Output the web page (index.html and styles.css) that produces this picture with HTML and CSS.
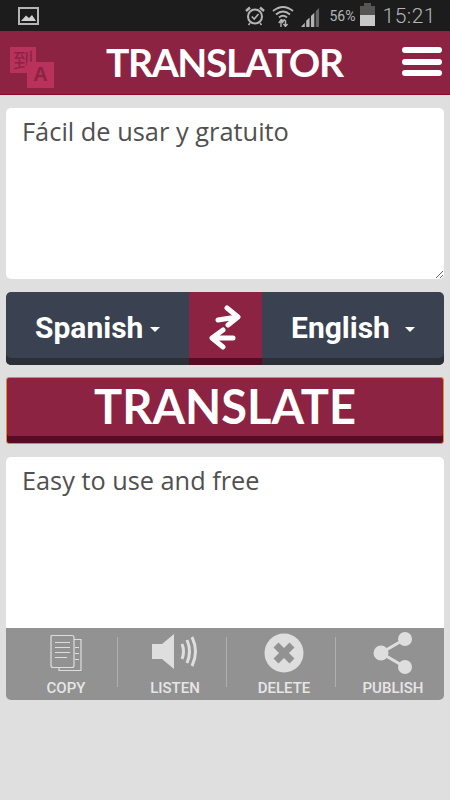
FILE: index.html
```html
<!DOCTYPE html>
<html lang="en">
<head>
    <meta charset="UTF-8">
    <meta name="viewport" content="width=device-width, initial-scale=1.0">
    <title>Translator</title>
    <link rel="stylesheet" href="styles.css">
</head>
<body>
    <div class="status-bar">
        <svg class="status-picture" width="21" height="18" viewBox="0 0 21 18">
            <rect x="1" y="1" width="19" height="16" fill="none" stroke="#b5b5b5" stroke-width="2"/>
            <path d="M3 14 L8 8.500 L11 11 L14 8 L18 14 Z" fill="#d0d0d0"/>
        </svg>
        <div class="status-right">
            <svg width="20" height="20" viewBox="0 0 20 20" fill="none" stroke="#b5b5b5">
                <circle cx="10" cy="10.500" r="7" stroke-width="2"/>
                <path d="M6.800 10.500 L9.200 13 L13.500 8" stroke-width="1.600"/>
                <path d="M1 5 L5 1.500 M19 5 L15 1.500" stroke-width="2.400"/>
                <path d="M5 17 L3.500 19 M15 17 L16.500 19" stroke-width="1.500"/>
            </svg>
            <svg class="status-wifi" width="22" height="22" viewBox="0 0 22 22" fill="none" stroke="#b5b5b5" stroke-width="1.800">
                <path d="M1 6 Q11 -2 21 6"/>
                <path d="M4 9.500 Q11 3.500 18 9.500"/>
                <path d="M7 12.500 Q11 9 15 12.500"/>
                <path d="M9 14.500 L11 16 L13 14.500"/>
                <path d="M9 15 V22 M6.800 18 L9 15 L11 18 M13.500 21 V15 M11.500 19 L13.500 21.500 L15.500 19" stroke-width="1.400"/>
            </svg>
            <svg class="status-signal" width="19" height="19" viewBox="0 0 20 20">
                <path d="M0 20 L4 15.500 V20 Z M5.500 20 V13.500 L9 10 V20 Z M10.500 20 V8.500 L14 5 V20 Z" fill="#b5b5b5"/>
                <path d="M15.500 20 V3.500 L19 0 V20 Z" fill="#666"/>
            </svg>
            <span class="status-battery-text">56%</span>
            <div class="status-battery"><div class="status-battery-fill"></div></div>
            <span class="status-time">15:21</span>
        </div>
    </div>

    <header class="app-header">
        <div class="app-logo">
            <div class="logo-back">到</div>
            <div class="logo-front">A</div>
        </div>
        <h1 class="app-title">TRANSLATOR</h1>
        <div class="menu-btn">
            <span></span>
            <span></span>
            <span></span>
        </div>
    </header>

    <main class="content">
        <textarea class="source-text">Fácil de usar y gratuito</textarea>

        <div class="lang-bar">
            <div class="lang lang-from">Spanish<span class="caret"></span></div>
            <div class="swap">
                <svg width="34" height="46" viewBox="0 0 34 46" fill="none" stroke="#fff" stroke-width="5" stroke-linecap="round" stroke-linejoin="round">
                    <path d="M9 15 L28 12 M18 3 L29 12 L19 20"/>
                    <path d="M24 33 H4 M14 25 L3 33 L14 42"/>
                </svg>
            </div>
            <div class="lang lang-to">English<span class="caret"></span></div>
        </div>

        <button class="translate-btn">TRANSLATE</button>

        <div class="result">
            <div class="result-text">Easy to use and free</div>
            <div class="actions">
                <div class="action">
                    <svg width="32" height="37" viewBox="0 0 32 37" fill="none" stroke="#dedede" stroke-width="1.200">
                        <path d="M9 33 V36 H31 V5 H24"/>
                        <path d="M2 1 H22 Q24 1 24 3 V31 Q24 33 22 33 H3 Q1 33 1 31 V2 Q1 1 2 1 Z"/>
                        <path d="M5 8 H20 M5 13 H20 M5 18 H20 M5 23 H17 M25 13 H29 M25 19 H29 M25 25 H29"/>
                    </svg>
                    <span>COPY</span>
                </div>
                <div class="action-sep"></div>
                <div class="action">
                    <svg width="46" height="38" viewBox="0 0 46 38" fill="none" stroke="#dedede">
                        <path d="M0 10 H10 L22 0 V35 L10 25 H0 Z" fill="#dedede" stroke="none"/>
                        <path d="M30 10 Q33 17.500 30 25" stroke-width="3"/>
                        <path d="M35 6 Q40 17.500 35 29" stroke-width="3"/>
                        <path d="M40 3 Q47 17.500 40 32" stroke-width="3"/>
                    </svg>
                    <span>LISTEN</span>
                </div>
                <div class="action-sep"></div>
                <div class="action">
                    <svg width="40" height="40" viewBox="0 0 40 40">
                        <circle cx="20" cy="20" r="19.500" fill="#dedede"/>
                        <path d="M12 12 L28 28 M28 12 L12 28" stroke="#929292" stroke-width="7"/>
                    </svg>
                    <span>DELETE</span>
                </div>
                <div class="action-sep"></div>
                <div class="action">
                    <svg width="40" height="42" viewBox="0 0 40 42" fill="none">
                        <path d="M32 7 L8 21 L32 35" stroke="#dedede" stroke-width="3"/>
                        <circle cx="32" cy="7" r="7" fill="#dedede"/>
                        <circle cx="8" cy="21" r="7.500" fill="#dedede"/>
                        <circle cx="32" cy="35" r="7" fill="#dedede"/>
                    </svg>
                    <span>PUBLISH</span>
                </div>
            </div>
        </div>
    </main>
</body>
</html>
```

FILE: styles.css
```css
html, body {
    height: 100%;
}
body {
    margin: 0;
    background-color: #dfdfdf;
    font-family: Roboto, "Liberation Sans", sans-serif;
    overflow: hidden;
}

/* Status bar */
.status-bar {
    display: flex;
    align-items: center;
    justify-content: space-between;
    height: 31px;
    padding: 0 14px 0 18px;
    background-color: #1c1c1c;
    color: #b5b5b5;
}
.status-right {
    display: flex;
    align-items: center;
}
.status-wifi {
    margin-left: 7px;
}
.status-signal {
    margin-left: 7px;
    margin-top: 3px;
}
.status-battery-text {
    margin-left: 9px;
    font-size: 14px;
}
.status-battery {
    position: relative;
    width: 15px;
    height: 20px;
    margin-left: 5px;
    background-color: #555;
}
.status-battery::before {
    content: "";
    position: absolute;
    top: -3px;
    left: 4px;
    width: 7px;
    height: 3px;
    background-color: #555;
}
.status-battery-fill {
    position: absolute;
    left: 0;
    right: 0;
    bottom: 0;
    height: 11px;
    background-color: #c8c8c8;
}
.status-time {
    margin-left: 7px;
    font-size: 21px;
    font-weight: 300;
    letter-spacing: 0.5px;
}

/* Header */
.app-header {
    display: flex;
    align-items: center;
    height: 63px;
    padding-left: 10px;
    background-color: #8c2342;
    border-bottom: 1px solid #8e0a22;
}
.app-logo {
    position: relative;
    width: 44px;
    height: 42px;
    margin-top: 10px;
}
.logo-back, .logo-front {
    position: absolute;
    display: flex;
    align-items: center;
    justify-content: center;
    background-color: #b8325c;
    color: #8c2342;
}
.logo-back {
    left: 0;
    top: 0;
    width: 26px;
    height: 26px;
    font-family: "Noto Sans CJK SC", sans-serif;
    font-size: 21px;
    line-height: 1;
    font-weight: 400;
}
.logo-front {
    left: 17px;
    top: 15px;
    width: 27px;
    height: 26px;
    font-family: "Liberation Sans", sans-serif;
    font-size: 20px;
    font-weight: bold;
}
.app-title {
    flex: 1;
    margin: 0 0 1px 52px;
    color: #fff;
    font-family: Lato, sans-serif;
    font-size: 39px;
    font-weight: bold;
    letter-spacing: -1.4px;
}
.menu-btn {
    display: flex;
    flex-direction: column;
    gap: 5.5px;
    width: 40px;
    margin: 0 8px 2px 0;
}
.menu-btn span {
    height: 6px;
    border-radius: 3px;
    background-color: #fff;
}

/* Main content */
.content {
    display: flex;
    flex-direction: column;
    padding: 13px 6px 0 6px;
}
.source-text {
    display: block;
    box-sizing: border-box;
    width: 100%;
    height: 171px;
    margin: 0;
    padding: 6px 16px;
    border: 0;
    border-radius: 5px;
    outline: 0;
    background-color: #fff;
    color: #505050;
    font-family: "Open Sans", sans-serif;
    font-size: 25.4px;
}
.lang-bar {
    display: flex;
    height: 73px;
    margin-top: 13px;
    border-radius: 5px;
    overflow: hidden;
    background-color: #3a4251;
    box-shadow: inset 0 -7px 0 #2d2f38;
}
.lang {
    display: flex;
    align-items: center;
    color: #fff;
    font-size: 30px;
    font-weight: 700;
    padding-bottom: 2px;
}
.lang-from {
    width: 183px;
    padding-left: 29px;
    box-sizing: border-box;
}
.lang-to {
    flex: 1;
    padding-left: 29px;
}
.caret {
    width: 0;
    height: 0;
    margin-left: 7px;
    margin-top: 3px;
    border-left: 5px solid transparent;
    border-right: 5px solid transparent;
    border-top: 5px solid #fff;
}
.lang-to .caret {
    margin-left: 15px;
}
.swap {
    display: flex;
    align-items: flex-start;
    justify-content: center;
    width: 73px;
    padding-top: 13px;
    box-sizing: border-box;
    background-color: #8c2342;
    box-shadow: inset 0 -7px 0 #560c24;
}
.translate-btn {
    display: block;
    box-sizing: border-box;
    height: 67px;
    margin-top: 12px;
    padding: 0 0 11px 0;
    border: 1px solid #d9901f;
    border-radius: 3px;
    background-color: #8c2342;
    box-shadow: inset 0 -7px 0 #560c24;
    color: #fff;
    font-family: Lato, sans-serif;
    font-size: 47px;
    font-weight: bold;
}
.result {
    margin-top: 13px;
    border-radius: 5px;
    overflow: hidden;
}
.result-text {
    box-sizing: border-box;
    height: 171px;
    padding: 6px 16px;
    background-color: #fff;
    color: #505050;
    font-family: "Open Sans", sans-serif;
    font-size: 25.3px;
}
.actions {
    display: flex;
    height: 72px;
    padding-left: 3px;
    background-color: #929292;
}
.action {
    flex: 1;
    display: flex;
    flex-direction: column;
    align-items: center;
    padding-left: 6px;
    color: #e6e6e6;
    font-size: 15px;
    font-weight: 500;
}
.action svg {
    display: block;
    height: 42px;
    margin: 4px 0 5px 0;
}
.action-sep {
    width: 1px;
    height: 50px;
    margin-top: 9px;
    background-color: #b0b0b0;
}
```
